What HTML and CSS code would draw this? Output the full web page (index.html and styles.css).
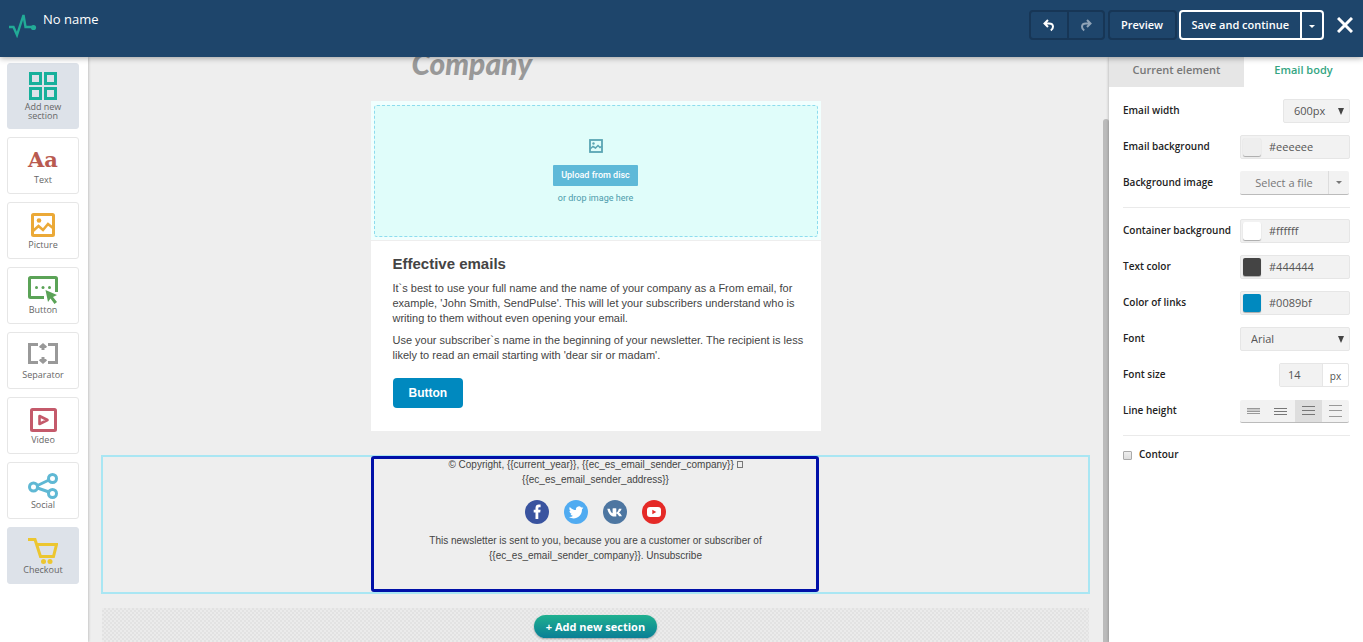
FILE: index.html
```
<!DOCTYPE html>
<html lang="en">
    <head>
        <meta charset="utf-8">
        <title>Email editor</title>
        <link rel="stylesheet" href="styles.css">
    </head>
    <body>
        <header class="topbar">
            <svg class="logo" width="28" height="26" viewBox="0 0 28 26" fill="none" stroke="#22ab97" stroke-width="2.400"><path d="M0 15h4.500l3.500 8 6.500-20 2 12h8"/><circle cx="24.500" cy="15.500" r="2.600" fill="#22ab97" stroke="none"/></svg>
            <span class="title">No name</span>
            <div class="actions">
                <div class="history">
                    <button aria-label="Undo"><svg width="12" height="13" viewBox="0 0 12 13"><path d="M5 1L1.500 4.500 5 8M2 4.500h4c2.500 0 4 1.200 4 3.300 0 1.500-.8 2.700-2.200 3.700" fill="none" stroke="#fff" stroke-width="2"/></svg></button>
                    <button aria-label="Redo" class="off"><svg width="12" height="13" viewBox="0 0 12 13"><path d="M7 1l3.500 3.500L7 8M10 4.500H6c-2.500 0-4 1.200-4 3.300 0 1.500.8 2.700 2.200 3.700" fill="none" stroke="#8fa3b7" stroke-width="2"/></svg></button>
                </div>
                <button class="preview">Preview</button>
                <div class="save">
                    <button>Save and continue</button>
                    <button class="more" aria-label="More save options"><span class="caret"></span></button>
                </div>
                <button class="close" aria-label="Close"><svg width="16" height="16" viewBox="0 0 16 16" stroke="#fff" stroke-width="3"><path d="M1 1l14 14M15 1L1 15"/></svg></button>
            </div>
        </header>

        <div class="editor">
            <nav class="blocks">
                <button class="block filled tall">
                    <svg width="28" height="28" viewBox="0 0 28 28" fill="none" stroke="#17b09b" stroke-width="3"><path d="M1.500 1.500h10v10h-10zM16.500 1.500h10v10h-10zM1.500 16.500h10v10h-10zM16.500 16.500h10v10h-10z"/></svg>
                    <span>Add new section</span>
                </button>
                <button class="block">
                    <b class="letters">Aa</b>
                    <span>Text</span>
                </button>
                <button class="block">
                    <svg width="24" height="24" viewBox="0 0 24 24" fill="none" stroke="#eba937" stroke-width="3"><rect x="1.500" y="1.500" width="21" height="21" rx="1"/><path d="M2 18l5.500-5 4.500 4 5-6 5 4" stroke-width="2.600"/><circle cx="8" cy="7.500" r="2.300" fill="#eba937" stroke="none"/></svg>
                    <span>Picture</span>
                </button>
                <button class="block close-icon">
                    <svg width="30" height="28" viewBox="0 0 30 28" fill="none" stroke="#5ba357" stroke-width="3"><path d="M16 21.500H2.500a1 1 0 0 1-1-1v-18a1 1 0 0 1 1-1h25a1 1 0 0 1 1 1V16"/><g fill="#5ba357" stroke="none"><circle cx="8.500" cy="11.500" r="1.500"/><circle cx="15" cy="11.500" r="1.500"/><circle cx="21.500" cy="11.500" r="1.500"/><path d="M17.500 14l11.500 5-4 2 4 5-2.500 2-4-5.500-2.500 3.500z"/></g></svg>
                    <span>Button</span>
                </button>
                <button class="block">
                    <svg width="30" height="24" viewBox="0 0 30 24" fill="none" stroke="#999" stroke-width="3"><path d="M10 1.500H1.500v18H10M20 1.500h8.500v18H20"/><path d="M15 0l4 3.500-1 1.500h-1.500v2h-3V5H12l-1-1.500zM15 21l4-3.500-1-1.500h-1.500v-2h-3v2H12l-1 1.500z" fill="#999" stroke="none"/></svg>
                    <span>Separator</span>
                </button>
                <button class="block">
                    <svg width="27" height="24" viewBox="0 0 27 24" fill="none" stroke="#c45a6b" stroke-width="3"><rect x="1.500" y="1.500" width="24" height="21" rx="1"/><path d="M9.500 8v8l8-4z" stroke-width="2.600" stroke-linejoin="round"/></svg>
                    <span>Video</span>
                </button>
                <button class="block close-icon">
                    <svg width="30" height="26" viewBox="0 0 30 26" fill="none" stroke="#5fb8d4" stroke-width="3"><circle cx="5.500" cy="14" r="4"/><circle cx="24.500" cy="5.500" r="4"/><circle cx="24.500" cy="20.500" r="4"/><path d="M9.500 12.500l11.500-5.500M9.500 15l11.500 4"/></svg>
                    <span>Social</span>
                </button>
                <button class="block filled close-icon">
                    <svg width="30" height="26" viewBox="0 0 30 26" fill="none" stroke="#ecc630" stroke-width="3"><path d="M0 1.500h7l5.500 17h13L28.500 6.500H9"/><g fill="#ecc630" stroke="none"><circle cx="15.500" cy="23.500" r="2.500"/><circle cx="22" cy="23.500" r="2.500"/></g></svg>
                    <span>Checkout</span>
                </button>
            </nav>

            <main class="canvas">
                <div class="brand">
                    <span>Company</span>
                </div>

                <section class="email">
                    <div class="image-block">
                        <div class="drop">
                            <svg width="14" height="14" viewBox="0 0 14 14" fill="none" stroke="#5aa5b3" stroke-width="1.800"><rect x="1" y="1" width="12" height="12"/><path d="M1 10l3-2.500 2.500 1.500L9 6.500l2 2 2-1.500" stroke-width="1.500"/><circle cx="4.500" cy="4.500" r="1.200" fill="#5aa5b3" stroke="none"/></svg>
                            <button>Upload from disc</button>
                            <span>or drop image here</span>
                        </div>
                    </div>
                    <div class="copy">
                        <h1>Effective emails</h1>
                        <p>It`s best to use your full name and the name of your company as a From email, for<br>example, 'John Smith, SendPulse'. This will let your subscribers understand who is<br>writing to them without even opening your email.</p>
                        <p>Use your subscriber`s name in the beginning of your newsletter. The recipient is less<br>likely to read an email starting with 'dear sir or madam'.</p>
                        <a href="#" class="cta">Button</a>
                    </div>
                </section>

                <section class="selected">
                    <div class="footer">
                        <p>© Copyright, {{current_year}}, {{ec_es_email_sender_company}} <i class="missing"></i><br>{{ec_es_email_sender_address}}</p>
                        <div class="social">
                            <a href="#" aria-label="Facebook"><svg width="24" height="24" viewBox="0 0 24 24"><circle cx="12" cy="12" r="12" fill="#39539f"/><path d="M10.500 19v-6.500H8.700V9.800h1.800V8c0-2.300 1.300-3.400 3.300-3.400h1.800v2.600h-1.200c-.8 0-1.100.4-1.100 1.200v1.400h2.300l-.4 2.700h-1.900V19z" fill="#fff"/></svg></a>
                            <a href="#" aria-label="Twitter"><svg width="24" height="24" viewBox="0 0 24 24"><circle cx="12" cy="12" r="12" fill="#50abf1"/><path d="M19.500 7.800c-.5.300-1.100.4-1.700.5.600-.4 1.100-1 1.300-1.600-.6.300-1.200.6-1.900.7a3 3 0 0 0-5.200 2.700c-2.500-.1-4.700-1.300-6.200-3.100-.8 1.400-.4 3.200.9 4.100-.5 0-1-.2-1.300-.4 0 1.500 1 2.700 2.400 3-.4.100-.9.100-1.400 0 .4 1.200 1.500 2.100 2.800 2.100-1.200 1-2.800 1.400-4.400 1.200 5.300 3.300 13.200.7 13.200-7.700.6-.4 1.100-.9 1.500-1.500z" fill="#fff"/></svg></a>
                            <a href="#" aria-label="VK"><svg width="24" height="24" viewBox="0 0 24 24"><circle cx="12" cy="12" r="12" fill="#4d76a1"/><path d="M11.500 16.500C7.500 16.500 5.300 13 4.300 8.700h2.500c.5 2.300 1.500 4 2.800 4.600V8.500c1.300-.4 2.800-.4 3.700 0v4.300c1-.4 1.900-1.900 2.600-4.100h2.700c-.5 1.600-1.600 2.900-2.600 3.700 1.200.9 2.300 2.100 3 3.900h-3c-.6-1.300-1.600-2.400-2.700-2.700v2.900z" fill="#fff"/></svg></a>
                            <a href="#" aria-label="YouTube"><svg width="24" height="24" viewBox="0 0 24 24"><circle cx="12" cy="12" r="12" fill="#e52a27"/><rect x="5" y="7" width="14" height="10" rx="3" fill="#fff"/><path d="M10.300 9.800v4.400l4-2.200z" fill="#e52a27"/></svg></a>
                        </div>
                        <p>This newsletter is sent to you, because you are a customer or subscriber of<br>{{ec_es_email_sender_company}}. Unsubscribe</p>
                    </div>
                </section>

                <div class="add-area">
                    <button>+ Add new section</button>
                </div>
                <div class="scrollbar"></div>
            </main>

            <aside class="settings">
                <div class="tabs">
                    <button>Current element</button>
                    <button class="active">Email body</button>
                </div>
                <div class="fields">
                    <div class="field">
                        <label for="width">Email width</label>
                        <div class="select small"><select id="width"><option>600px</option></select></div>
                    </div>
                    <div class="field">
                        <label for="email-bg">Email background</label>
                        <div class="color"><span class="swatch grey"></span><input id="email-bg" type="text" value="#eeeeee"></div>
                    </div>
                    <div class="field">
                        <label for="bg-image">Background image</label>
                        <div class="file">
                            <button id="bg-image">Select a file</button>
                            <button class="more" aria-label="More file options"><span class="caret"></span></button>
                        </div>
                    </div>
                    <hr>
                    <div class="field">
                        <label for="container-bg">Container background</label>
                        <div class="color"><span class="swatch white"></span><input id="container-bg" type="text" value="#ffffff"></div>
                    </div>
                    <div class="field">
                        <label for="text-color">Text color</label>
                        <div class="color"><span class="swatch dark"></span><input id="text-color" type="text" value="#444444"></div>
                    </div>
                    <div class="field">
                        <label for="link-color">Color of links</label>
                        <div class="color"><span class="swatch blue"></span><input id="link-color" type="text" value="#0089bf"></div>
                    </div>
                    <div class="field">
                        <label for="font">Font</label>
                        <div class="select"><select id="font"><option>Arial</option></select></div>
                    </div>
                    <div class="field">
                        <label for="font-size">Font size</label>
                        <div class="size"><input id="font-size" type="text" value="14"><span>px</span></div>
                    </div>
                    <div class="field">
                        <span class="label" id="line-height">Line height</span>
                        <div class="lines" role="group" aria-labelledby="line-height">
                            <button aria-label="Tight"><svg width="13" height="12" viewBox="0 0 13 12"><path d="M0 3h13v4H0z" fill="#ccc"/><path d="M0 3.500h13M0 6.500h13M0 8.500h13" stroke="#999"/></svg></button>
                            <button aria-label="Normal"><svg width="13" height="12" viewBox="0 0 13 12" stroke="#777"><path d="M0 3.500h13M0 6.500h13M0 9.500h13"/></svg></button>
                            <button aria-label="Relaxed" class="on"><svg width="13" height="12" viewBox="0 0 13 12" stroke="#777"><path d="M0 1.500h13M0 5.500h13M0 9.500h13"/></svg></button>
                            <button aria-label="Loose"><svg width="13" height="12" viewBox="0 0 13 12" stroke="#999"><path d="M0 .5h13M0 5.500h13M0 11.500h13"/></svg></button>
                        </div>
                    </div>
                    <hr>
                    <div class="check">
                        <input id="contour" type="checkbox">
                        <label for="contour">Contour</label>
                    </div>
                </div>
            </aside>
        </div>
    </body>
</html>
```

FILE: styles.css
```
* {
    box-sizing: border-box;
}
body {
    margin: 0;
    height: 100vh;
    display: flex;
    flex-direction: column;
    overflow: hidden;
    font-family: "Open Sans", sans-serif;
    font-size: 11px;
    color: #333;
    background: #eee;
}
button, input, select {
    font: inherit;
    color: inherit;
    margin: 0;
    padding: 0;
    border: 0;
    background: none;
    outline: none;
}
svg {
    display: block;
}
.caret {
    display: block;
    border: 3px solid transparent;
    border-top-color: currentColor;
    border-bottom: 0;
}

/* top bar */
.topbar {
    position: relative;
    z-index: 2;
    display: flex;
    align-items: flex-start;
    flex: none;
    height: 57px;
    padding: 10px 10px 0 9px;
    background: #1e456b;
    color: #fff;
    box-shadow: 0 1px 6px rgba(0, 0, 0, .35);
}
.topbar .logo {
    margin-top: 2px;
}
.topbar .title {
    margin-left: 6px;
    font-size: 13px;
    line-height: 18px;
}
.actions {
    display: flex;
    align-items: center;
    margin-left: auto;
    font-weight: 600;
}
.history {
    display: flex;
    height: 30px;
    border: 2px solid #173656;
    border-radius: 4px;
}
.history button {
    display: flex;
    align-items: center;
    justify-content: center;
    width: 36px;
}
.history .off {
    border-left: 2px solid #173656;
}
.preview {
    width: 69px;
    height: 30px;
    margin: 0 2px 0 3px;
    padding-bottom: 2px;
    border: 2px solid #173656;
    border-radius: 4px;
}
.save {
    display: flex;
    height: 30px;
    border: 2px solid #fff;
    border-radius: 4px;
}
.save button {
    padding: 0 11px 2px;
}
.save .more {
    padding: 2px 7px 0;
    border-left: 2px solid #fff;
}
.close {
    margin-left: 13px;
}

/* layout */
.editor {
    flex: 1;
    display: flex;
    min-height: 0;
}

/* block palette */
.blocks {
    position: relative;
    flex: none;
    display: flex;
    flex-direction: column;
    gap: 8px;
    width: 88px;
    padding: 6px 9px 0 7px;
    background: #fff;
    box-shadow: 0 0 3px rgba(0, 0, 0, .3);
}
.block {
    display: flex;
    flex-direction: column;
    align-items: center;
    justify-content: flex-end;
    flex: none;
    height: 57px;
    padding: 0 12px 7px;
    border: 1px solid #e6e6e6;
    border-radius: 3px;
    font-size: 9px;
    line-height: 12px;
    color: #666;
}
.block svg {
    margin-bottom: 2px;
}
.block.close-icon svg {
    margin-bottom: 0;
}
.block.filled {
    background: #dde2e9;
    border-color: #dde2e9;
}
.block.tall {
    height: 66px;
    padding-bottom: 8px;
    line-height: 9px;
}
.letters {
    font-family: "DejaVu Serif", serif;
    font-size: 21px;
    line-height: 28px;
    color: #b95a50;
}

/* canvas */
.canvas {
    position: relative;
    flex: 1;
    min-width: 0;
    display: flex;
    flex-direction: column;
    padding: 0 19px 0 13px;
    overflow: hidden;
    font-family: "Liberation Sans", Arial, sans-serif;
    color: #444;
}
.brand, .email {
    flex: none;
    width: 450px;
    margin: 0 auto;
}
.brand {
    display: flex;
    align-items: flex-end;
    height: 44px;
    padding: 0 41px 18px;
    font: italic 900 30px/40px Lato, sans-serif;
    color: #999;
}
.email {
    background: #fff;
}
.image-block {
    height: 140px;
    padding: 4px 3px;
    background: #f1fffe;
    border-bottom: 1px solid #eee;
}
.drop {
    display: flex;
    flex-direction: column;
    align-items: center;
    height: 132px;
    padding-top: 33px;
    border: 1px dashed #8edcee;
    border-radius: 3px;
    background: #e0fdfa;
    font: 9px/13px Roboto, sans-serif;
    color: #4c9bab;
}
.drop button {
    height: 21px;
    margin: 12px 0 6px;
    padding: 0 8px;
    border-radius: 1px;
    background: #5eb9d8;
    color: #fff;
    font-weight: 500;
}
.copy {
    padding: 12px 22px 23px;
    line-height: 15px;
}
.copy h1 {
    margin: 0 0 7px;
    font-size: 15px;
    line-height: 21px;
}
.copy p {
    margin: 0 0 7px;
    white-space: nowrap;
}
.cta {
    display: inline-block;
    margin-top: 8px;
    padding: 0 16px;
    border-radius: 4px;
    background: #0089bf;
    color: #fff;
    font-size: 12px;
    font-weight: bold;
    line-height: 30px;
    text-decoration: none;
}
.selected {
    flex: none;
    margin-top: 24px;
    border: 2px solid #a9e6f3;
}
.footer {
    position: relative;
    width: 450px;
    min-height: 135px;
    margin: 0 auto;
    text-align: center;
    font-size: 10px;
    line-height: 15px;
}
.footer::after {
    content: "";
    position: absolute;
    inset: -1px 2px 0 0;
    border: 3px solid #0010a8;
    border-radius: 3px;
    pointer-events: none;
}
.footer p {
    margin: 0;
}
.missing {
    display: inline-block;
    width: 6px;
    height: 7px;
    border: 1px solid #777;
}
.social {
    display: flex;
    justify-content: center;
    gap: 15px;
    margin: 13px 0 9px;
}
.add-area {
    flex: 1;
    margin: 14px 1px 0;
    padding-top: 7px;
    text-align: center;
    background: conic-gradient(#e2e2e2 25%, #ebebeb 0 50%, #e2e2e2 0 75%, #ebebeb 0) 0 0 / 4px 4px;
}
.add-area button {
    height: 23px;
    padding: 0 12px 1px;
    border-radius: 12px;
    background: linear-gradient(#1fb08f, #0a7f96);
    box-shadow: 0 1px 2px rgba(0, 0, 0, .3);
    color: #fff;
    font: bold 11px "Open Sans", sans-serif;
}
.scrollbar {
    position: absolute;
    top: 62px;
    right: 0;
    bottom: 0;
    width: 6px;
    border-radius: 3px 3px 0 0;
    background: #bbb;
}

/* settings */
.settings {
    position: relative;
    flex: none;
    width: 254px;
    background: #fff;
    box-shadow: 0 0 3px rgba(0, 0, 0, .3);
}
.tabs {
    display: flex;
    height: 30px;
}
.tabs button {
    width: 135px;
    padding-bottom: 5px;
    background: #e6e6e6;
    font-weight: 600;
    color: #777;
}
.tabs .active {
    flex: 1;
    background: #fff;
    color: #35a582;
}
.fields {
    padding: 6px 13px 0 14px;
    color: #555;
}
.fields hr {
    height: 1px;
    margin: 6px 0 5px;
    border: 0;
    background: #eaeaea;
}
.field {
    display: flex;
    align-items: center;
    justify-content: space-between;
    height: 36px;
}
.fields label, .label {
    padding-bottom: 2px;
    font-size: 10px;
    font-weight: 600;
    color: #222;
    white-space: nowrap;
}
.select, .color {
    display: flex;
    align-items: center;
    width: 110px;
    height: 24px;
    border: 1px solid #e6e6e6;
    border-radius: 2px;
    background: #f2f2f2;
}
.select {
    position: relative;
}
.select.small {
    width: 67px;
}
.select select {
    width: 100%;
    height: 100%;
    padding: 0 0 2px 10px;
    appearance: none;
}
.select::after {
    content: "";
    position: absolute;
    right: 5px;
    border: 3px solid transparent;
    border-top: 7px solid #444;
    border-bottom: 0;
    pointer-events: none;
}
.swatch {
    flex: none;
    width: 18px;
    height: 18px;
    margin: 0 8px 0 2px;
    border-radius: 2px;
    box-shadow: 0 1px 1px rgba(0, 0, 0, .3);
}
.swatch.grey {
    background: #eee;
}
.swatch.white {
    background: #fff;
}
.swatch.dark {
    background: #444;
}
.swatch.blue {
    background: #0089bf;
}
.color input {
    width: 100%;
    min-width: 0;
    padding-bottom: 2px;
}
.file, .lines {
    display: flex;
    width: 109px;
    height: 24px;
    margin-right: 1px;
    border-bottom: 1px solid #bbb;
    border-radius: 2px;
    background: #f2f2f2;
    color: #777;
}
.file button {
    flex: 1;
}
.file .more {
    flex: none;
    padding: 0 7px;
    border-left: 1px solid #ddd;
}
.size {
    display: flex;
    width: 70px;
    height: 24px;
    margin-right: 1px;
    border: 1px solid #e6e6e6;
    border-radius: 2px;
}
.size input {
    width: 43px;
    padding: 0 0 2px 8px;
    background: #f2f2f2;
    border-right: 1px solid #e6e6e6;
}
.size span {
    flex: 1;
    text-align: center;
    font-size: 10px;
    line-height: 24px;
}
.lines {
    height: 23px;
}
.lines button {
    flex: 1;
    display: flex;
    align-items: center;
    justify-content: center;
}
.lines .on {
    background: #dedede;
}
.check {
    display: flex;
    align-items: center;
    gap: 7px;
    height: 28px;
}
.check input {
    width: 9px;
    height: 9px;
    appearance: none;
    border: 1px solid #aaa;
    border-radius: 1px;
    background: linear-gradient(#eee, #ddd);
}
```
